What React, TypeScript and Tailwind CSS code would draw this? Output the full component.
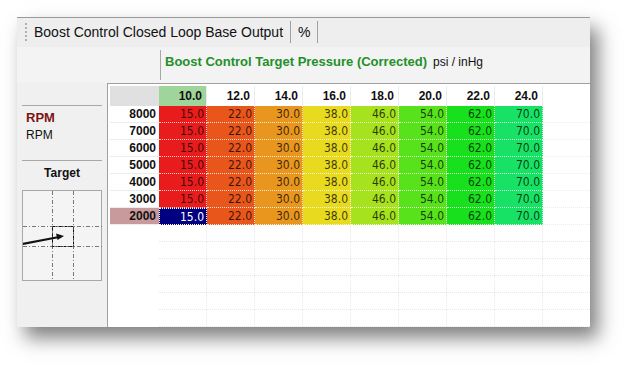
import React from 'react';

const COLS = [
  { h: '10.0', v: '15.0', bg: 'bg-[#e81c1c]', hd: 'bg-[#9fd49b]' },
  { h: '12.0', v: '22.0', bg: 'bg-[#e8561c]', hd: 'bg-white' },
  { h: '14.0', v: '30.0', bg: 'bg-[#e8961e]', hd: 'bg-white' },
  { h: '16.0', v: '38.0', bg: 'bg-[#e8da1e]', hd: 'bg-white' },
  { h: '18.0', v: '46.0', bg: 'bg-[#a6e21e]', hd: 'bg-white' },
  { h: '20.0', v: '54.0', bg: 'bg-[#58e21c]', hd: 'bg-white' },
  { h: '22.0', v: '62.0', bg: 'bg-[#18e01c]', hd: 'bg-white' },
  { h: '24.0', v: '70.0', bg: 'bg-[#18e266]', hd: 'bg-white' },
];

const ROWS = ['8000', '7000', '6000', '5000', '4000', '3000', '2000'];
const EMPTY = [0, 1, 2, 3, 4, 5];

const cellFont = "font-['DejaVu_Sans_Condensed','DejaVu_Sans',sans-serif]";

function TargetBox() {
  return (
    <div className="mx-[5px] h-[91px] border border-[#a8a8a8] bg-[#f4f4f4]">
      <svg width="80" height="89" viewBox="0 0 80 89">
        <g stroke="#777" strokeWidth="1" strokeDasharray="4 2 1 2" fill="none">
          <line x1="29.5" y1="0" x2="29.5" y2="89" />
          <line x1="50.5" y1="0" x2="50.5" y2="89" />
          <line x1="0" y1="35.5" x2="80" y2="35.5" />
          <line x1="0" y1="55.5" x2="80" y2="55.5" />
        </g>
        <rect x="29.5" y="35.5" width="21" height="20" fill="none" stroke="#111" strokeDasharray="3 1 1 1" />
        <line x1="-1" y1="53" x2="36" y2="46" stroke="#111" strokeWidth="2.2" />
        <polygon points="41,45 33,42.5 34.5,49" fill="#111" />
      </svg>
    </div>
  );
}

export default function App() {
  return (
    <div className="w-[638px] h-[375px] bg-white pt-[17px] pl-[17px] font-['Liberation_Sans',Arial,sans-serif]">
      <div className="w-[573px] h-[310px] flex flex-col bg-[#f2f2f2] border-t border-[#9a9a9a] shadow-[8px_11px_18px_rgba(0,0,0,0.5)]">
        {/* toolbar */}
        <div className="h-[29px] flex items-center bg-[#eeeeee] pl-[8px] text-[14px] text-[#111]">
          <div className="h-[18px] border-l-2 border-dotted border-[#b0b0b0] mr-[7px]" />
          <span>Boost Control Closed Loop Base Output</span>
          <div className="h-[22px] w-px bg-[#a0a0a0] ml-[7px] mr-[7px]" />
          <span>%</span>
          <div className="h-[22px] w-px bg-[#a0a0a0] ml-[6px]" />
        </div>

        {/* title band */}
        <div className="h-[37px] flex bg-[#f3f3f3]">
          <div className="w-[143px]" />
          <div className="mt-[3px] h-[30px] w-px bg-[#a8a8a8]" />
          <div className="pl-[4px] pt-[5px] flex items-baseline gap-[6px]">
            <span className="text-[13px] font-bold text-[#23902a]">Boost Control Target Pressure (Corrected)</span>
            <span className="text-[12px] text-[#111]">psi / inHg</span>
          </div>
        </div>

        {/* body */}
        <div className="flex-1 flex">
          {/* left panel */}
          <div className="w-[90px] bg-[#f0f0f0] pt-[22px]">
            <div className="mx-[5px] h-px bg-[#a8a8a8]" />
            <div className="pl-[9px] pt-[4px] text-[13px] font-bold leading-[15px] text-[#7c1414]">RPM</div>
            <div className="pl-[9px] pt-[3px] text-[12px] leading-[14px] text-[#111]">RPM</div>
            <div className="mt-[18px] mx-[5px] h-px bg-[#a8a8a8]" />
            <div className="pt-[5px] text-center text-[12px] font-bold leading-[14px] text-[#111]">Target</div>
            <div className="mt-[10px]">
              <TargetBox />
            </div>
          </div>

          {/* table */}
          <div className="flex-1 bg-white border-l border-t border-[#a0a0a0] pl-[2px] pt-[2px] overflow-hidden">
            {/* header row */}
            <div className="flex h-[20px]">
              <div className="w-[49px] bg-[#e0e0e0]" />
              {COLS.map((c) => (
                <div
                  key={c.h}
                  className={`w-[48px] ${c.hd} border-r border-[#ececec] flex items-center justify-end pr-[4px] text-[12px] font-bold text-[#111]`}
                >
                  {c.h}
                </div>
              ))}
              <div className="flex-1" />
            </div>

            {/* data rows */}
            {ROWS.map((r) => {
              const sel = r === '2000';
              return (
                <div key={r} className="flex h-[17px]">
                  <div
                    className={`w-[49px] border-b border-[#ececec] flex items-center justify-end pr-[3px] text-[12px] font-bold text-[#111] ${
                      sel ? 'bg-[#c99a9b] text-[#2a0a0a]' : 'bg-white'
                    }`}
                  >
                    {r}
                  </div>
                  {COLS.map((c, i) => {
                    const active = sel && i === 0;
                    return (
                      <div
                        key={c.h}
                        className={`w-[48px] flex items-center justify-end pr-[2px] text-[12px] ${cellFont} ${
                          active
                            ? 'bg-[#000080] text-white border border-dotted border-white'
                            : `${c.bg} text-black/75 border-r border-b border-dotted border-white/80`
                        }`}
                      >
                        {c.v}
                      </div>
                    );
                  })}
                  <div className="flex-1 border-b border-dotted border-[#ececec]" />
                </div>
              );
            })}

            {/* empty rows */}
            {EMPTY.map((e) => (
              <div key={e} className="flex h-[17px]">
                <div className="w-[49px]" />
                {COLS.map((c) => (
                  <div key={c.h} className="w-[48px] border-r border-b border-dotted border-[#e8e8e8]" />
                ))}
                <div className="flex-1 border-b border-dotted border-[#e8e8e8]" />
              </div>
            ))}
          </div>
        </div>
      </div>
    </div>
  );
}
